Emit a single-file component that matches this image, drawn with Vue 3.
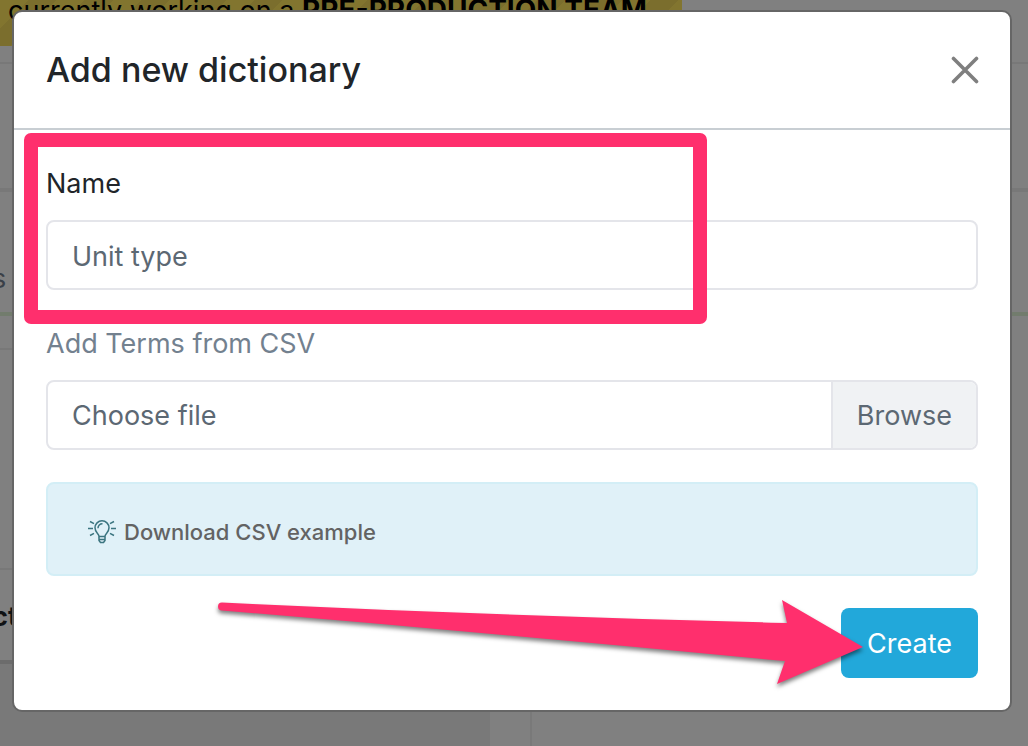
<script setup>
import { ref } from 'vue'

const name = ref('Unit type')
</script>

<template>
  <div class="screen">
    <div class="page" aria-hidden="true">
      <div class="banner">currently working on a <strong>PRE-PRODUCTION TEAM</strong></div>
      <div class="row row-top"></div>
      <div class="row row-tabs"></div>
      <div class="row row-status">s</div>
      <div class="columns">
        <div class="list">
          <div class="cell cell-small"></div>
          <div class="cell cell-tall"></div>
          <div class="cell cell-title">ct</div>
        </div>
        <div class="detail"></div>
      </div>
    </div>

    <section class="modal" role="dialog" aria-labelledby="dialog-title">
      <header class="modal-header">
        <h1 id="dialog-title">Add new dictionary</h1>
        <button class="close" type="button" aria-label="Close">
          <svg width="28" height="28" viewBox="0 0 28 28">
            <path d="M2.500 2.500 25.500 25.500M25.500 2.500 2.500 25.500" fill="none" stroke="#7f7f7f" stroke-width="3.600" stroke-linecap="round" />
          </svg>
        </button>
      </header>

      <form class="modal-body" @submit.prevent>
        <div class="field">
          <label for="name">Name</label>
          <input id="name" v-model="name" class="control" type="text" />
          <div class="highlight"></div>
        </div>
        <div class="field">
          <label class="muted" for="csv">Add Terms from CSV</label>
          <div class="control file">
            <span class="file-name">Choose file</span>
            <span class="browse">Browse</span>
            <input id="csv" class="file-input" type="file" />
          </div>
        </div>
        <div class="hint">
          <svg width="28" height="24" viewBox="0 0 28 24" fill="none" stroke="#3b7580" stroke-width="1.500">
            <path d="M11 16.500C11 13.500 7 12.500 7 7.800a7 7 0 0 1 14 0c0 4.700-4 5.700-4 8.700Z" />
            <path d="M10 8.200a4.300 4.300 0 0 1 4.500-4.400M11 17v3.500l1.500 2h3l1.500-2V17M11 19.500h6" />
            <path d="M0 8.500h5M23 8.500h5M2 1.500l4 2.200M26 1.500l-4 2.200M2 15.500l4-2.200M26 15.500l-4-2.200" />
          </svg>
          <a href="#">Download CSV example</a>
        </div>
        <div class="actions">
          <button class="create" type="submit">Create</button>
          <svg class="arrow" width="660" height="100" viewBox="0 0 660 100">
            <path d="M20 10.500 Q300 24 585 31 L580 8 L661 55 L575 92 L583 69 Q300 42 20 18.500 A4 4 0 0 1 20 10.500Z" fill="#ff2f6d" />
          </svg>
        </div>
      </form>
    </section>
  </div>
</template>

<style>
body {
  margin: 0;
  background: #808080;
}
</style>

<style scoped>
.screen {
  position: relative;
  display: flow-root;
  min-height: 100vh;
  box-sizing: border-box;
  overflow: hidden;
  font-family: Inter, "Liberation Sans", sans-serif;
  font-size: 27px;
  line-height: 42px;
  color: #212529;
}

.page {
  position: absolute;
  inset: 0;
  display: flex;
  flex-direction: column;
  background: #808080;
}

.banner {
  width: 682px;
  height: 46px;
  padding-left: 8px;
  box-sizing: border-box;
  line-height: 20px;
  color: #000;
  white-space: nowrap;
  background: repeating-linear-gradient(135deg, #82752f 0 20px, #7b6e2d 20px 40px);
}

.banner strong {
  font-size: 28px;
}

.row,
.cell {
  box-sizing: border-box;
  border-bottom: 2px solid #787878;
}

.row-top {
  height: 18px;
}

.row-tabs {
  height: 128px;
  border-bottom-width: 4px;
}

.row-status {
  height: 124px;
  padding-top: 66px;
  border-bottom: 4px solid #727c6d;
  color: #3a4048;
  text-indent: -8px;
}

.columns {
  flex: 1;
  display: flex;
  gap: 40px;
}

.list {
  width: 490px;
  background: #797979;
}

.cell {
  background: #808080;
}

.cell-small {
  height: 34px;
}

.cell-tall {
  height: 220px;
}

.cell-title {
  height: 94px;
  padding-top: 26px;
  border-bottom: 4px solid #6c6c6c;
  color: #101214;
  font-weight: 700;
  text-indent: -8px;
}

.detail {
  flex: 1;
  border-left: 2px solid #797979;
}

.modal {
  position: relative;
  margin: 10px 16px 34px 12px;
  border: 2px solid #666;
  border-radius: 10px;
  background: #fff;
}

.modal-header {
  display: flex;
  align-items: center;
  justify-content: space-between;
  padding: 31px 31px 31px 32px;
  border-bottom: 2px solid #c8ced3;
}

h1 {
  margin: 0;
  font-size: 34px;
  line-height: 54px;
  font-weight: 500;
}

.close {
  display: flex;
  padding: 0;
  border: 0;
  background: none;
}

.modal-body {
  display: flex;
  flex-direction: column;
  gap: 32px;
  padding: 32px;
}

.field {
  position: relative;
  display: flex;
  flex-direction: column;
  gap: 14px;
}

.field label {
  line-height: 44px;
}

.muted {
  color: #73818f;
}

.control {
  width: 100%;
  height: 70px;
  box-sizing: border-box;
  padding: 2px 24px 0;
  border: 2px solid #e4e5ea;
  border-radius: 8px;
  background: #fff;
  color: #5c6873;
  font: inherit;
}

.file {
  position: relative;
  display: flex;
  align-items: stretch;
  padding: 0 0 0 24px;
  line-height: 68px;
  overflow: hidden;
}

.file-name {
  flex: 1;
}

.browse {
  padding: 0 24px;
  border-left: 2px solid #e4e5ea;
  background: #f0f2f4;
}

.file-input {
  position: absolute;
  inset: 0;
  opacity: 0;
}

.highlight {
  position: absolute;
  top: -29px;
  left: -22px;
  width: 683px;
  height: 191px;
  box-sizing: border-box;
  border: 14px solid #ff2f6d;
  border-radius: 7px;
  pointer-events: none;
}

.hint {
  display: flex;
  align-items: center;
  gap: 8px;
  padding: 27px 40px 21px;
  border: 2px solid #d3eef6;
  border-radius: 8px;
  background: #e0f1f8;
}

.hint a {
  color: #636363;
  font-size: 22px;
  font-weight: 500;
  text-decoration: none;
}

.actions {
  position: relative;
  display: flex;
  justify-content: flex-end;
}

.create {
  height: 70px;
  padding: 2px 26px 0;
  border: 0;
  border-radius: 8px;
  background: #22a8da;
  color: #fff;
  font: inherit;
}

.arrow {
  position: absolute;
  top: -16px;
  right: 116px;
  overflow: visible;
  pointer-events: none;
  filter: drop-shadow(0 3px 2px rgba(0, 0, 0, 0.5));
}
</style>
